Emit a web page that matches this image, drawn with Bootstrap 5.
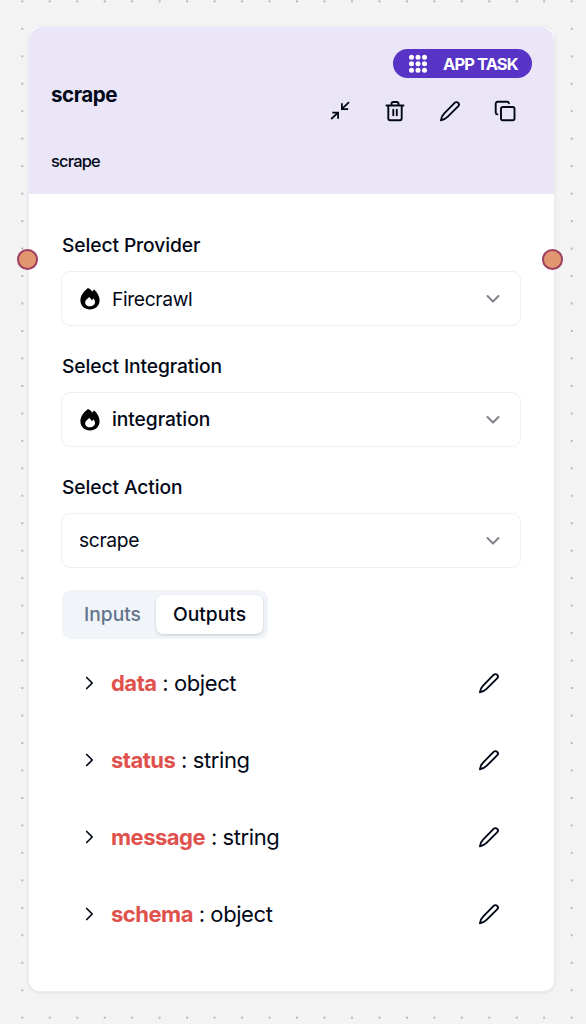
<!DOCTYPE html>
<html lang="en">
<head>
<meta charset="utf-8">
<meta name="viewport" content="width=device-width, initial-scale=1">
<title>App task: scrape</title>
<link href="https://cdn.jsdelivr.net/npm/bootstrap@5.3.0/dist/css/bootstrap.min.css" rel="stylesheet">
<style>
  body { font-family: Inter, "Liberation Sans", sans-serif; color: #020817; height: 1024px; overflow: hidden;
    background: #f3f3f3 radial-gradient(circle at 50% 50%, #999 0, #999 .5px, transparent 1.1px) 8.6px -12.4px / 27.47px 27.47px; }
  svg { display: block; flex: none; }
  .stroke { fill: none; stroke: currentColor; stroke-width: 1.9; stroke-linecap: round; stroke-linejoin: round; }
  .node { width: 525px; height: 964px; margin: 27px 0 0 29px; border-radius: 11px; background: #fff; box-shadow: 0 0 0 1px #edeef2, 0 1px 3px 1px rgba(30,40,80,.09); }
  .node-head { height: 167px; background: #eae6f7; border-radius: 14px 14px 0 0; padding: 22px 22px 0; }
  .node-title { font-size: 20.6px; line-height: 28px; font-weight: 650; letter-spacing: -.5px; margin-top: 32px; }
  .node-desc { font-size: 16.5px; line-height: 22px; letter-spacing: -.85px; margin-top: 41px; font-weight: 500; }
  .kind { width: 139px; height: 29px; background: #5733c6; color: #fff; font-size: 16.5px; font-weight: 700; letter-spacing: -.9px; padding-left: 15px; gap: 15px; }
  .kind span { padding-top: 1px; }
  .tools { gap: 33px; margin: 22px 16px 0 0; }
  .node-body { padding: 37px 33px 0; }
  .field-name { font-size: 19.23px; line-height: 28px; font-weight: 500; letter-spacing: -.1px; margin-bottom: 12px; }
  .picker { height: 55px; border: 1px solid #eceff5; border-radius: 9px; padding: 0 16px 0 17px; font-size: 19.23px; letter-spacing: -.35px; margin-bottom: 26px; margin-left: -1px; width: 460px; }
  .picker-text { margin-left: 3px; }
  .picker-low { padding-top: 2px; }
  .picker-strong { font-weight: 500; letter-spacing: -.05px; }
  .chev { opacity: .5; stroke-width: 2.2; }
  .switch { width: 206px; height: 49px; background: #f1f5f9; border-radius: 9px; padding: 5px; font-size: 19.23px; font-weight: 500; margin-top: -4px; }
  .switch-off { width: 89px; color: #64748b; padding-left: 17px; }
  .switch-on { width: 107px; border-radius: 7px; background: #fff; box-shadow: 0 1px 3px rgba(0,0,0,.18); }
  .outs { padding: 6px 21px 0 16px; }
  .out { height: 77px; font-size: 22px; letter-spacing: -.42px; }
  .out > svg { margin-bottom: 2px; }
  .key { color: #df514c; font-weight: 700; letter-spacing: -.5px; }
  .port { width: 21px; height: 21px; border-radius: 50%; background: #e29670; border: 2px solid #9e3f62; top: 222px; }
  .port-l { left: -12px; } .port-r { right: -9px; }
</style>
</head>
<body>
<svg width="0" height="0" class="position-absolute">
  <symbol id="pen" viewBox="0 0 22 22"><path d="M15.600 2.900c1-1 2.600-1.100 3.600-.1s.9 2.600-.1 3.600L8.800 16.700c-2.300 2.300-4 3.400-6.900 3.500.1-2.900 1.100-4.600 3.400-6.900Z"/></symbol>
  <symbol id="down" viewBox="0 0 24 24"><path d="m6 8.800 6 6 6-6"/></symbol>
  <symbol id="right" viewBox="0 0 24 24"><path d="m9.500 18 6-6-6-6"/></symbol>
  <symbol id="flame" viewBox="0 0 20 22"><path fill-rule="evenodd" d="M8 0c2 .9 3.200 2 4.300 3.700.5-.8 1-1.500 1.800-2.200C17.300 4.300 19.600 8.300 19.600 12.300c0 5.400-4.200 9.200-9.600 9.200S.4 17.700.4 12.300C.4 7.500 4 2.800 8 0ZM9.300 9c-1.800 1.500-4.200 3.100-4.200 5.400 0 2.400 2.200 3.900 4.900 3.900s5-1.500 5-4.200c0-1.300-.6-2.500-1.500-3.500l-1.700 1.700C11.200 11 10.300 9.900 9.300 9Z"/></symbol>
</svg>
<main class="node position-relative">
  <header class="node-head d-flex justify-content-between">
    <div>
      <div class="node-title">scrape</div>
      <div class="node-desc">scrape</div>
    </div>
    <div class="d-flex flex-column align-items-end">
      <div class="kind rounded-pill d-flex align-items-center">
        <svg width="20" height="20" viewBox="0 0 20 20" fill="#fff"><circle cx="3.500" cy="3.300" r="2.500"/><circle cx="10" cy="3.300" r="2.500"/><circle cx="16.500" cy="3.300" r="2.500"/><circle cx="3.500" cy="9.800" r="2.500"/><circle cx="10" cy="9.800" r="2.500"/><circle cx="16.500" cy="9.800" r="2.500"/><circle cx="3.500" cy="16.300" r="2.500"/><circle cx="10" cy="16.300" r="2.500"/><circle cx="16.500" cy="16.300" r="2.500"/></svg>
        <span>APP TASK</span>
      </div>
      <div class="tools d-flex">
        <svg width="22" height="22" viewBox="0 0 22 22" fill="none" stroke="currentColor" stroke-width="1.800"><path d="m2.200 19 6.600-6.200M3.300 12.700h5.800v6M20 2.200l-7 6.600M12.900 3.300v5.800h6.300"/></svg>
        <svg class="stroke" width="22" height="22" viewBox="0 0 22 22"><path d="M2.500 5.500h17M4.300 5.500v12.800c0 1.100.8 1.900 1.900 1.900h9.600c1.100 0 1.900-.8 1.900-1.900V5.500M7.500 5V3.700c0-1 .7-1.700 1.700-1.700h3.600c1 0 1.700.7 1.700 1.700V5M9.300 9.800v5.500M12.800 9.800v5.500"/></svg>
        <svg class="stroke" width="22" height="22"><use href="#pen"/></svg>
        <svg class="stroke" width="22" height="22" viewBox="0 0 22 22"><rect x="7" y="7" width="13.500" height="13.300" rx="1.800"/><path d="M3.400 14.400c-1-.2-1.700-.9-1.700-1.900V3.600c0-1 .8-1.800 1.800-1.800h9.600c1 0 1.700.6 1.900 1.600"/></svg>
      </div>
    </div>
  </header>
  <section class="node-body">
    <div class="field-name">Select Provider</div>
    <div class="picker d-flex align-items-center">
      <svg class="me-2" width="22" height="22"><use href="#flame"/></svg><span class="picker-text picker-low">Firecrawl</span>
      <svg class="stroke chev ms-auto" width="22" height="22"><use href="#down"/></svg>
    </div>
    <div class="field-name">Select Integration</div>
    <div class="picker d-flex align-items-center">
      <svg class="me-2" width="22" height="22"><use href="#flame"/></svg><span class="picker-text picker-strong">integration</span>
      <svg class="stroke chev ms-auto" width="22" height="22"><use href="#down"/></svg>
    </div>
    <div class="field-name">Select Action</div>
    <div class="picker d-flex align-items-center">
      <span>scrape</span>
      <svg class="stroke chev ms-auto" width="22" height="22"><use href="#down"/></svg>
    </div>
    <div class="switch d-flex">
      <div class="switch-off d-flex align-items-center">Inputs</div>
      <div class="switch-on d-flex align-items-center justify-content-center">Outputs</div>
    </div>
    <div class="outs">
      <div class="out d-flex align-items-center"><svg class="stroke me-2" width="22" height="22"><use href="#right"/></svg><span class="picker-text"><span class="key">data</span> : object</span><svg class="stroke ms-auto" width="22" height="22"><use href="#pen"/></svg></div>
      <div class="out d-flex align-items-center"><svg class="stroke me-2" width="22" height="22"><use href="#right"/></svg><span class="picker-text"><span class="key">status</span> : string</span><svg class="stroke ms-auto" width="22" height="22"><use href="#pen"/></svg></div>
      <div class="out d-flex align-items-center"><svg class="stroke me-2" width="22" height="22"><use href="#right"/></svg><span class="picker-text"><span class="key">message</span> : string</span><svg class="stroke ms-auto" width="22" height="22"><use href="#pen"/></svg></div>
      <div class="out d-flex align-items-center"><svg class="stroke me-2" width="22" height="22"><use href="#right"/></svg><span class="picker-text"><span class="key">schema</span> : object</span><svg class="stroke ms-auto" width="22" height="22"><use href="#pen"/></svg></div>
    </div>
  </section>
  <span class="port port-l position-absolute"></span>
  <span class="port port-r position-absolute"></span>
</main>
<script src="https://cdn.jsdelivr.net/npm/bootstrap@5.3.0/dist/js/bootstrap.bundle.min.js"></script>
</body>
</html>
